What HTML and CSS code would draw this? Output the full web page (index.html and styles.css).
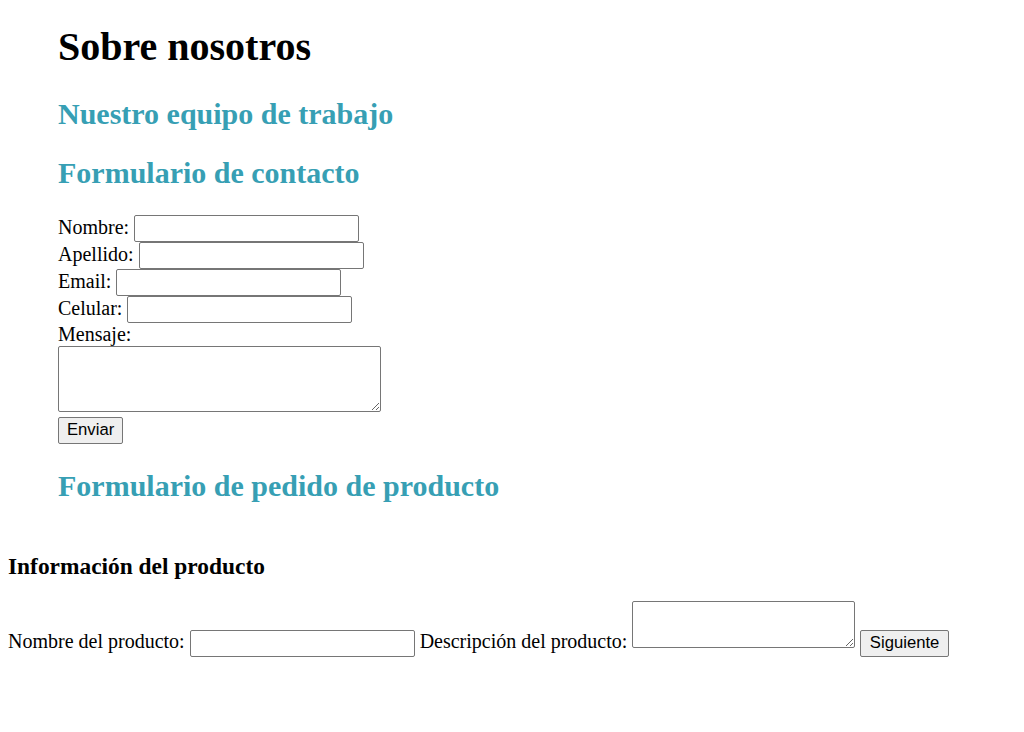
FILE: index.html
```html
<!DOCTYPE html>
<html lang="es">
<head>
<meta charset="utf-8">
<title>Sobre nosotros</title>
<link rel="stylesheet" href="styles.css">
</head>
<body>
<main class="about">
  <h1 class="title">Sobre nosotros</h1>
  <h2 class="subtitle">Nuestro equipo de trabajo</h2>
  <h2 class="subtitle">Formulario de contacto</h2>
  <form class="contact">
    <label>Nombre:</label> <input type="text" class="field"><br>
    <label>Apellido:</label> <input type="text" class="field"><br>
    <label>Email:</label> <input type="email" class="field"><br>
    <label>Celular:</label> <input type="tel" class="field"><br>
    <label>Mensaje:</label><br>
    <textarea class="message"></textarea><br>
    <button type="button" class="btn">Enviar</button>
  </form>
  <h2 class="subtitle">Formulario de pedido de producto</h2>
</main>
<section class="order">
  <h3 class="order-title">Información del producto</h3>
  <form class="order-form">
    <label>Nombre del producto:</label> <input type="text" class="field"> <label>Descripción del producto:</label> <textarea class="desc"></textarea> <button type="button" class="btn btn-next">Siguiente</button>
  </form>
</section>
</body>
</html>
```

FILE: styles.css
```css
html, body {
  background: #ffffff;
}
body {
  margin: 8px;
  font-family: "Liberation Serif", "Times New Roman", serif;
  font-size: 20px;
  color: #000000;
}
.about {
  padding-left: 50px;
}
.title {
  font-size: 40px;
  font-weight: bold;
  margin: 15px 0 26.8px;
}
.subtitle {
  font-size: 30px;
  font-weight: bold;
  color: #379fb4;
  margin: 25px 0;
}
.contact {
  margin: 0;
}
.field {
  font-family: Arial, "Liberation Sans", sans-serif;
  font-size: 16.67px;
  box-sizing: border-box;
  width: 225px;
  height: 27px;
  padding: 1px 2px;
  border: 1px solid #767676;
  border-radius: 2px;
  background: #ffffff;
  vertical-align: baseline;
}
.message,
.desc {
  font-family: "Liberation Mono", monospace;
  font-size: 16.67px;
  box-sizing: border-box;
  border: 1px solid #767676;
  border-radius: 2px;
  padding: 2px;
  margin: 0;
  vertical-align: baseline;
}
.message {
  width: 323px;
  height: 66px;
}
.desc {
  width: 223px;
  height: 47px;
}
.btn {
  font-family: Arial, "Liberation Sans", sans-serif;
  font-size: 16.67px;
  box-sizing: border-box;
  height: 27px;
  padding: 1px 8px;
  border: 1px solid #767676;
  border-radius: 2px;
  background: #efefef;
  color: #000000;
}
.btn-next {
  padding: 1px 8.5px;
}
.order-title {
  font-size: 23.4px;
  font-weight: bold;
  margin: 50px 0 21.4px;
}
.order-form {
  margin: 0;
}
```
